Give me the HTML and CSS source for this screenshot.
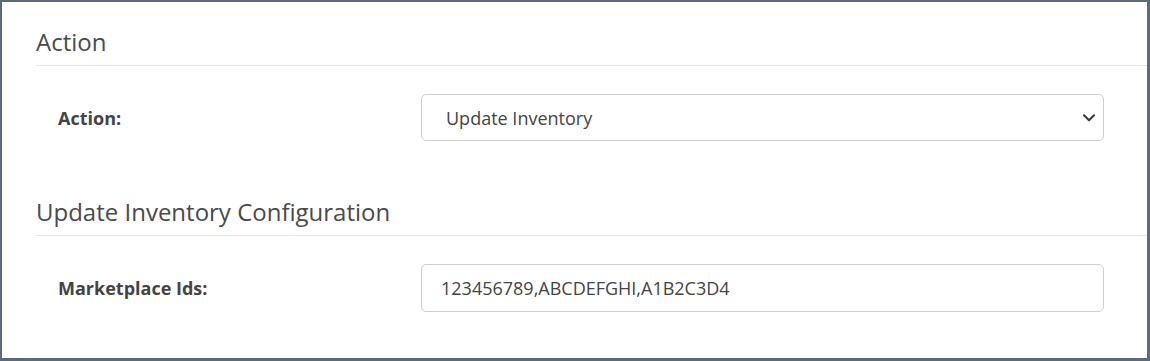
FILE: index.html
```html
<!DOCTYPE html>
<html lang="en">
<head>
<meta charset="utf-8">
<title>Action</title>
<link rel="stylesheet" href="styles.css">
</head>
<body>
<div class="frame">
  <section class="section">
    <h2 class="section-title">Action</h2>
    <div class="row">
      <label class="row-label" for="action">Action:</label>
      <div class="select-wrap">
        <select id="action" class="control select">
          <option>Update Inventory</option>
        </select>
        <svg class="chevron" width="12" height="8" viewBox="0 0 12 8" aria-hidden="true">
          <path d="M1 1.2 L6 6.2 L11 1.2" fill="none" stroke="#3a3a3a" stroke-width="2" stroke-linecap="round" stroke-linejoin="round"/>
        </svg>
      </div>
    </div>
  </section>
  <section class="section section-second">
    <h2 class="section-title">Update Inventory Configuration</h2>
    <div class="row">
      <label class="row-label" for="ids">Marketplace Ids:</label>
      <input id="ids" class="control input" type="text" value="123456789,ABCDEFGHI,A1B2C3D4">
    </div>
  </section>
</div>
</body>
</html>
```

FILE: styles.css
```css
html, body {
  margin: 0;
  padding: 0;
  background: #ffffff;
}

.frame {
  box-sizing: border-box;
  width: 1150px;
  height: 361px;
  border-style: solid;
  border-color: #5b6b79;
  border-width: 2px 3px 3px 2px;
  background: #ffffff;
  font-family: "Open Sans", "Liberation Sans", sans-serif;
  color: #444444;
  padding-top: 25px;
}

.section {
  padding-left: 34px;
}

.section-second {
  margin-top: 56px;
}

.section-title {
  margin: 0;
  font-size: 24px;
  font-weight: 400;
  line-height: 29px;
  color: #4a4a4a;
  padding-bottom: 9px;
  border-bottom: 1px solid #e6e6e6;
}

.row {
  display: flex;
  align-items: center;
  padding-left: 22px;
  margin-top: 28px;
}

.row-label {
  width: 363px;
  flex: none;
  font-size: 18px;
  font-weight: 700;
  color: #444444;
}

.select-wrap {
  position: relative;
  width: 683px;
}

.control {
  box-sizing: border-box;
  width: 683px;
  height: 47px;
  border: 1px solid #cfcfcf;
  border-radius: 5px;
  background: #ffffff;
  font-family: "Open Sans", "Liberation Sans", sans-serif;
  font-size: 18px;
  color: #444444;
  margin: 0;
  outline: none;
}

.select {
  -webkit-appearance: none;
  appearance: none;
  padding: 0 40px 0 24px;
  display: block;
}

.input {
  height: 48px;
  padding: 0 19px;
}

.chevron {
  position: absolute;
  right: 9px;
  top: 20px;
  pointer-events: none;
}
```
